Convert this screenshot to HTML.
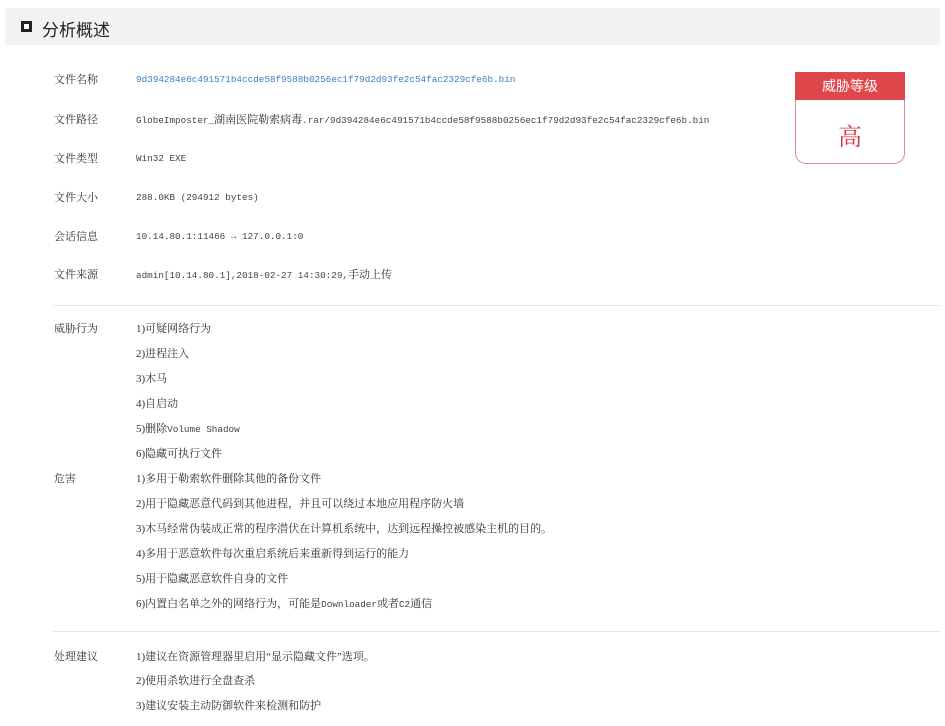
<!DOCTYPE html>
<html><head><meta charset="utf-8"><style>
body{margin:0;width:945px;height:726px;background:#fff;position:relative;overflow:hidden;font-family:"Liberation Serif","Noto Serif CJK SC",serif;font-size:11px;color:#333}
.hd{position:absolute;left:5px;top:8px;width:935px;height:37px;background:#f2f2f2;border-radius:2px}
.ic{position:absolute;left:21px;top:21px;width:5px;height:5px;border:3px solid #222;background:#fff}
.tt{position:absolute;left:42px;top:16px;font-size:17px;color:#222;font-family:"Liberation Sans","Noto Sans CJK SC",sans-serif}
.t{position:absolute;white-space:nowrap;line-height:14px}
.m{font-family:"Liberation Mono",monospace;font-size:9.3px;color:#444}
.ln{position:absolute;left:53px;width:887px;height:1px;background:#e8e8e8}
.bd{position:absolute;left:795px;top:72px;width:108px;height:91px;border:1px solid #e8858a;border-top:none;border-radius:0 0 11px 11px}
.bh{position:absolute;left:795px;top:72px;width:110px;height:28px;background:#e0474c;color:#fff;font-size:14px;text-align:center;line-height:28px;font-family:"Liberation Sans","Noto Sans CJK SC",sans-serif}
.bv{position:absolute;left:795px;top:117px;width:110px;text-align:center;font-size:24px;color:#d9383e}
</style></head><body>
<div class="hd"></div><div class="ic"></div><div class="tt">分析概述</div>
<div class="bd"></div><div class="bh">威胁等级</div><div class="bv">高</div>
<div class="t" style="left:54px;top:73px">文件名称</div>
<div class="t m" style="left:136px;top:73px;color:#3d7cc0">9d394284e6c491571b4ccde58f9588b0256ec1f79d2d93fe2c54fac2329cfe6b.bin</div>
<div class="t" style="left:54px;top:113px">文件路径</div>
<div class="t" style="left:136px;top:113px"><span class="m">GlobeImposter_</span>湖南医院勒索病毒<span class="m">.rar/9d394284e6c491571b4ccde58f9588b0256ec1f79d2d93fe2c54fac2329cfe6b.bin</span></div>
<div class="t" style="left:54px;top:152px">文件类型</div>
<div class="t m" style="left:136px;top:152px">Win32 EXE</div>
<div class="t" style="left:54px;top:191px">文件大小</div>
<div class="t m" style="left:136px;top:191px">288.0KB (294912 bytes)</div>
<div class="t" style="left:54px;top:230px">会话信息</div>
<div class="t m" style="left:136px;top:230px">10.14.80.1:11466 → 127.0.0.1:0</div>
<div class="t" style="left:54px;top:268px">文件来源</div>
<div class="t" style="left:136px;top:268px"><span class="m">admin[10.14.80.1],2018-02-27 14:30:29,</span>手动上传</div>
<div class="ln" style="top:305px"></div>
<div class="t" style="left:54px;top:322px">威胁行为</div>
<div class="t" style="left:136px;top:322px">1)可疑网络行为</div>
<div class="t" style="left:136px;top:347px">2)进程注入</div>
<div class="t" style="left:136px;top:372px">3)木马</div>
<div class="t" style="left:136px;top:397px">4)自启动</div>
<div class="t" style="left:136px;top:422px">5)删除<span class="m">Volume Shadow</span></div>
<div class="t" style="left:136px;top:447px">6)隐藏可执行文件</div>
<div class="t" style="left:54px;top:472px">危害</div>
<div class="t" style="left:136px;top:472px">1)多用于勒索软件删除其他的备份文件</div>
<div class="t" style="left:136px;top:497px">2)用于隐藏恶意代码到其他进程，并且可以绕过本地应用程序防火墙</div>
<div class="t" style="left:136px;top:522px">3)木马经常伪装成正常的程序潜伏在计算机系统中，达到远程操控被感染主机的目的。</div>
<div class="t" style="left:136px;top:547px">4)多用于恶意软件每次重启系统后来重新得到运行的能力</div>
<div class="t" style="left:136px;top:572px">5)用于隐藏恶意软件自身的文件</div>
<div class="t" style="left:136px;top:597px">6)内置白名单之外的网络行为，可能是<span class="m">Downloader</span>或者<span class="m">C2</span>通信</div>
<div class="ln" style="top:631px"></div>
<div class="t" style="left:54px;top:650px">处理建议</div>
<div class="t" style="left:136px;top:650px">1)建议在资源管理器里启用“显示隐藏文件”选项。</div>
<div class="t" style="left:136px;top:674px">2)使用杀软进行全盘查杀</div>
<div class="t" style="left:136px;top:699px">3)建议安装主动防御软件来检测和防护</div>
</body></html>
